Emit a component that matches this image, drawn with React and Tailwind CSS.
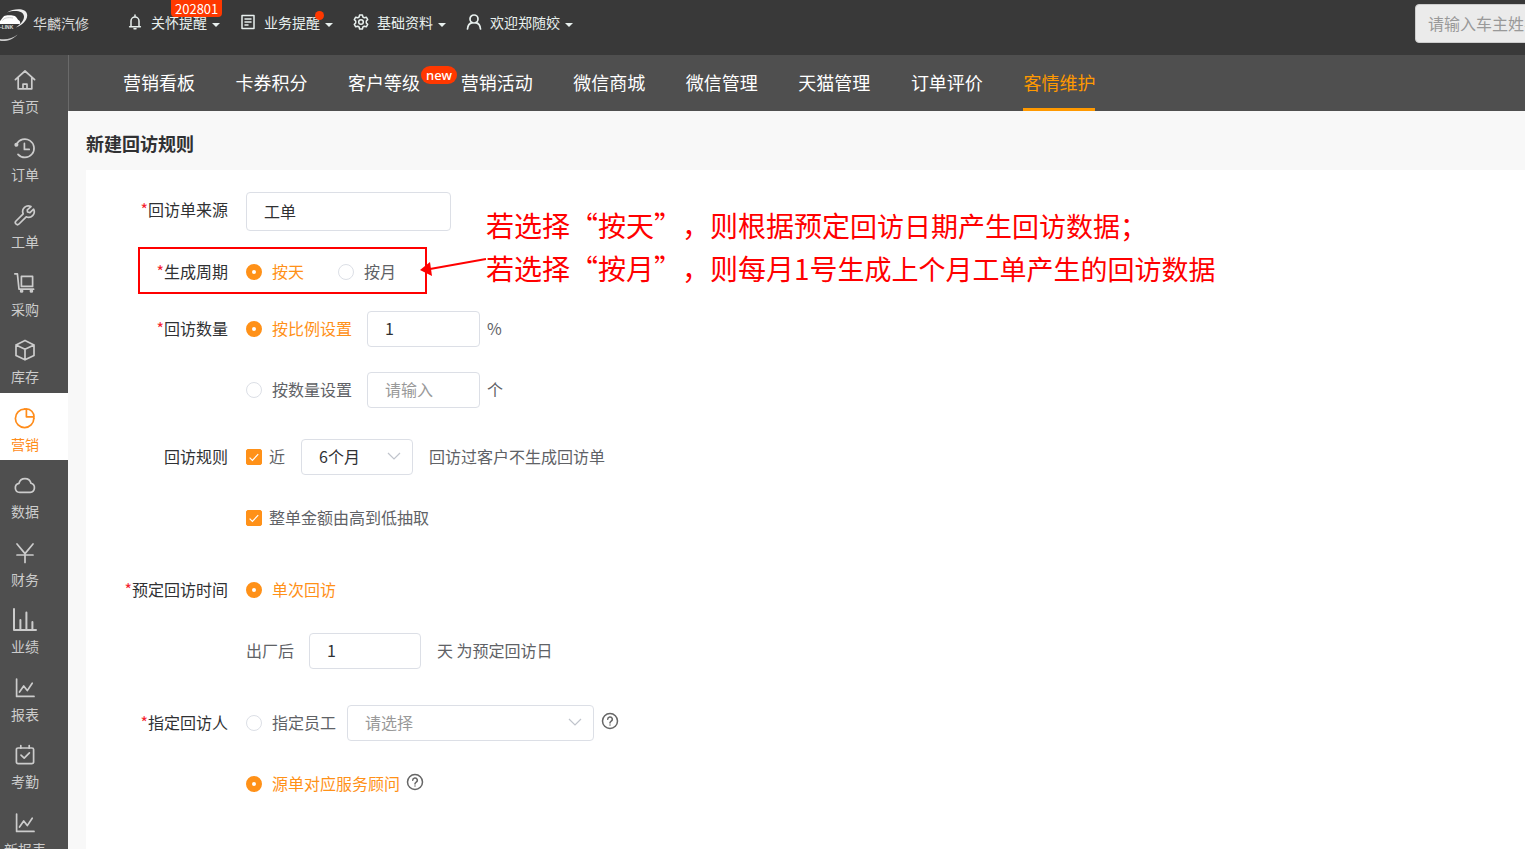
import { useState } from "react";

const stroke = { fill: "none", stroke: "currentColor", strokeWidth: 1.5, strokeLinejoin: "round", strokeLinecap: "round" };

function Icon({ children, className = "size-[22px]" }) {
  return (
    <svg viewBox="0 0 22 22" className={className} aria-hidden="true" {...stroke} strokeWidth="1.700">
      {children}
    </svg>
  );
}

const ChartIcon = () => (
  <Icon>
    <path d="M2.6 2v17.4H20M5.5 15l4.2-6 3.6 4.6 4.9-7.4" />
  </Icon>
);

const sideItems = [
  ["首页", <Icon key="i"><path d="M1.4 10.6 11 2l9.6 8.6M4.2 8.6v11.2h13.6V8.6M9 19.6v-4.4h4v4.4" /></Icon>],
  ["订单", <Icon key="i"><path d="M2.600 7.200A9.200 9.200 0 1 1 4 17.400M10.400 6.400v6h4.800" /><circle cx="2.400" cy="7.800" r="1.200" fill="currentColor" /></Icon>],
  ["工单", <Icon key="i"><path d="M17 2.600a5.600 5.600 0 0 0-7.800 7.200L2 17a2.100 2.100 0 0 0 3 3l7.200-7.200A5.600 5.600 0 0 0 19.600 5.200L16 8.600l-2.500-.6-.2-2.200z" /></Icon>],
  ["采购", <Icon key="i"><path d="M.8 1.800H3.400L5 17.200H19.600M7.400 4.400h11.200v10H7.400z" /><circle cx="7.600" cy="19" r="1" /><circle cx="17.400" cy="19" r="1" /></Icon>],
  ["库存", <Icon key="i"><path d="M11 1.400 20 6v10.400l-9 4.400-9-4.400V6zM2 6l9 4.200L20 6M11 10.200v10.600" /></Icon>],
  ["营销", <Icon key="i"><path d="M10.600 2.200A9.200 9.200 0 1 0 19.800 11.400" /><path d="M12.400 1.800v8h7.600a8 8 0 0 0-7.600-8zM19.800 11.400V9.800M10.600 2.200l1.800-.4" /></Icon>],
  ["数据", <Icon key="i"><path d="M5.800 18.400a4.600 4.600 0 0 1-.8-9.100 6.200 6.200 0 0 1 12-.1 4.700 4.700 0 0 1-.8 9.200z" /></Icon>],
  ["财务", <Icon key="i"><path d="M3 2l8 9.600L19 2M3 13h16M11 12v8.400" /></Icon>],
  ["业绩", <svg key="i" viewBox="0 0 26 24" className="h-6 w-[26px]" aria-hidden="true" {...stroke} strokeWidth="2"><path d="M2 1v21h22M8.400 12v10M14.400 4.500v17.500M20.400 14v8" /></svg>],
  ["报表", <ChartIcon key="i" />],
  ["考勤", <Icon key="i"><rect x="2.400" y="4" width="17.200" height="15.600" rx="1.600" /><path d="M6.800 1.600v2.600M15.200 1.600v2.600M7 11.200l3.200 3 5.200-5.400" /></Icon>],
  ["新报表", <ChartIcon key="i" />],
];

const navItems = ["营销看板", "卡券积分", "客户等级", "营销活动", "微信商城", "微信管理", "天猫管理", "订单评价", "客情维护"];

function Logo() {
  return (
    <svg viewBox="0 0 28 34" className="h-[34px] w-7 shrink-0" aria-hidden="true">
      <path d="M7 4.500C14 .2 26.500-.4 27.200 7c.4 6-6.200 10.600-11.400 12.600 4-3 8.400-6.800 8.200-11.200C23.600 3 15 1.600 7 4.500z" fill="#eee" />
      <path d="M0 13c1.600-1 2.600-4.600 5-5.200 3.400-.8 7.600-.6 9.800.2 2 1 2.400 3.600 4.600 4.800.9.800 1 2 .4 3.200H0z" fill="#fff" />
      <path d="M2.500 12.500C4 9.800 8 9.200 13 10" stroke="#bbb" strokeWidth=".8" fill="none" />
      <text x="0" y="21" fontSize="5" fontWeight="700" fontFamily="Liberation Sans, sans-serif" fill="#ddd">-LINK</text>
      <path d="M0 31c7 1 13-1 17.600-4.600C13 31.400 6 34 0 32.800z" fill="#ccc" />
    </svg>
  );
}

function TopItem({ icon, label, children, className = "" }) {
  return (
    <button type="button" className={`relative flex shrink-0 items-center text-sm leading-5 text-[#e8f0ee] ${className}`}>
      {icon}
      <span className="ml-2">{label}</span>
      <span className="mt-1.5 ml-[5px] border-x-4 border-t-4 border-x-transparent border-t-[#e8f0ee]" />
      {children}
    </button>
  );
}

const Txt = ({ children }) => <span className="pb-0.5">{children}</span>;

function Radio({ label, ...props }) {
  return (
    <label className="flex shrink-0 items-center gap-[10px] text-[#606266] has-checked:text-[#ff9118]">
      <input
        type="radio"
        className="size-4 appearance-none rounded-full border border-[#dcdfe6] bg-white checked:border-[6px] checked:border-[#ff9118]"
        {...props}
      />
      <Txt>{label}</Txt>
    </label>
  );
}

function Check({ label, id }) {
  const [on, setOn] = useState(true);
  return (
    <label htmlFor={id} className="flex shrink-0 items-center gap-[7px] text-[#606266]">
      <span className="grid size-4">
        <input
          id={id}
          type="checkbox"
          checked={on}
          onChange={() => setOn(!on)}
          className="col-start-1 row-start-1 size-4 appearance-none rounded-xs border border-[#dcdfe6] checked:border-[#ff9118] checked:bg-[#ff9118]"
        />
        {on && (
          <svg viewBox="0 0 16 16" className="pointer-events-none col-start-1 row-start-1 size-4" aria-hidden="true">
            <path d="M3.600 8.600l2.800 2.800 5.800-6.200" fill="none" stroke="#fff" strokeWidth="1.200" />
          </svg>
        )}
      </span>
      <Txt>{label}</Txt>
    </label>
  );
}

function Field({ className = "", ...props }) {
  return (
    <input
      type="text"
      className={`h-9 rounded border border-[#dcdfe6] bg-white px-[17px] pb-0.5 text-[#303133] outline-none placeholder:text-[#999] ${className}`}
      {...props}
    />
  );
}

function Select({ className = "", options, ...props }) {
  return (
    <span className={`grid shrink-0 items-center ${className}`}>
      <select className="col-start-1 row-start-1 h-9 w-full appearance-none rounded border border-[#dcdfe6] bg-white px-[17px] pb-0.5 text-inherit outline-none" {...props}>
        {options.map((o) => (
          <option key={o}>{o}</option>
        ))}
      </select>
      <svg viewBox="0 0 14 8" className="pointer-events-none col-start-1 row-start-1 mr-3 mb-0.5 h-2 w-[14px] justify-self-end" aria-hidden="true">
        <path d="M1 1l6 6 6-6" fill="none" stroke="#c0c4cc" strokeWidth="1.200" />
      </svg>
    </span>
  );
}

function Help() {
  return (
    <button type="button" aria-label="帮助" className="shrink-0 pb-1 text-[#666]">
      <svg viewBox="0 0 18 18" className="size-[18px]" aria-hidden="true" {...stroke}>
        <circle cx="9" cy="9" r="7.500" />
        <path d="M6.700 7.200a2.300 2.300 0 1 1 3.300 2.100c-.7.400-1 .8-1 1.500v.2M9 12.900v.2" />
      </svg>
    </button>
  );
}

function Group({ label, required, className = "", children }) {
  return (
    <div role="group" aria-label={label} className={`flex gap-[18px] ${className}`}>
      <div className="flex h-9 w-[142px] shrink-0 items-center justify-end pb-0.5 text-[#303133]">
        {required && <span className="text-[#f5222d]">*</span>}
        {label}
      </div>
      <div className="flex flex-col gap-[25px]">{children}</div>
    </div>
  );
}

const Row = ({ children }) => <div className="flex h-9 items-center whitespace-nowrap text-[#606266]">{children}</div>;

export default function App() {
  const [cycle, setCycle] = useState("day");
  const [amount, setAmount] = useState("ratio");
  const [person, setPerson] = useState("advisor");

  return (
    <div className="flex h-screen flex-col overflow-hidden bg-[#f8f8f8] font-['Noto_Sans_CJK_SC',sans-serif] text-base leading-6" lang="zh-CN">
      <header className="flex h-[55px] shrink-0 items-start overflow-hidden bg-[#393939]">
        <div className="flex w-[127px] shrink-0 items-center gap-[5px] pt-2">
          <Logo />
          <span className="pb-1 text-sm whitespace-nowrap text-[#d8d8d8]">华麟汽修</span>
        </div>
        <div className="flex shrink-0 pt-3 whitespace-nowrap">
          <TopItem
            label="关怀提醒"
            icon={<svg viewBox="0 0 16 16" className="size-4" aria-hidden="true" {...stroke}><path d="M2.600 12.800h10.800M4 12.600V7a4 4 0 0 1 8 0v5.600M8 1v2M7 14.800h2" /></svg>}
          >
            <span className="absolute -top-3 left-11 rounded-b-sm bg-[#ff3800] px-1 text-[13px] leading-[17px] text-white">202801</span>
          </TopItem>
          <TopItem
            className="ml-5"
            label="业务提醒"
            icon={<svg viewBox="0 0 16 16" className="size-4" aria-hidden="true" {...stroke}><path d="M2 1.500h12v13H2zM5 5h6M5 8h6M5 11h3" /></svg>}
          >
            <span className="absolute -top-px right-[9px] size-[9px] rounded-full bg-[#ff3800]" />
          </TopItem>
          <TopItem
            className="ml-5"
            label="基础资料"
            icon={<svg viewBox="0 0 16 16" className="size-4" aria-hidden="true" {...stroke}><path d="M6.600 1h2.800l.5 2 1.400.8 2-.6 1.400 2.400L13.300 7v2l1.400 1.400-1.400 2.400-2-.6-1.400.8-.5 2H6.600l-.5-2-1.400-.8-2 .6-1.400-2.400L2.700 9V7L1.300 5.600l1.400-2.400 2 .6L6.100 3z" /><circle cx="8" cy="8" r="2.300" /></svg>}
          />
          <TopItem
            className="ml-5"
            label="欢迎郑随姣"
            icon={<svg viewBox="0 0 16 16" className="size-4" aria-hidden="true" {...stroke} strokeWidth="1.700"><circle cx="8" cy="5" r="4" /><path d="M1.500 15c.3-3.600 2.500-5.800 4.700-6.300M14.500 15c-.3-3.600-2.500-5.800-4.700-6.300" /></svg>}
          />
        </div>
        <input
          type="text"
          aria-label="搜索"
          placeholder="请输入车主姓名/车牌号"
          className="-mr-[90px] mt-1 ml-auto h-[39px] w-[200px] shrink-0 rounded border border-[#ccc] bg-[#ebebeb] px-3 pb-0.5 outline-none placeholder:text-[#999]"
        />
      </header>

      <div className="flex min-h-0 flex-1">
        <aside className="w-[68px] shrink-0 overflow-hidden bg-[#4f4f4f]">
          <nav className="grid h-[810px] grid-rows-12">
            {sideItems.map(([label, icon]) => (
              <a
                key={label}
                href="#"
                aria-current={label === "营销" ? "page" : undefined}
                className={`flex flex-col items-center gap-1 pt-[13px] pr-[18px] text-sm leading-5 whitespace-nowrap ${label === "营销" ? "bg-white text-[#ff8c1a]" : "text-[#ccc]"}`}
              >
                <span className="flex h-6 items-center">{icon}</span>
                {label}
              </a>
            ))}
          </nav>
        </aside>

        <div className="flex min-w-0 flex-1 flex-col">
          <nav className="h-14 shrink-0 overflow-hidden border-l border-[#6a6a6a] bg-[#4f4f4f] pl-[54px]">
            <div className="grid h-full w-[1013px] grid-cols-9">
              {navItems.map((label) => (
                <a
                  key={label}
                  href="#"
                  className={`relative justify-self-start border-b-[3px] pt-[14px] text-lg leading-[26px] whitespace-nowrap ${label === "客情维护" ? "border-[#ff9900] text-[#ff9900]" : "border-transparent text-white"}`}
                >
                  {label}
                  {label === "客户等级" && (
                    <span className="absolute top-[11px] left-[73px] z-10 rounded-full bg-[#ff3800] px-[5px] font-['Noto_Sans'] text-[13px] leading-[18px] font-medium text-white">new</span>
                  )}
                </a>
              ))}
            </div>
          </nav>

          <main className="flex min-h-0 flex-1 flex-col pl-[18px]">
            <h1 className="shrink-0 pt-5 pb-[14px] text-lg leading-[25px] font-bold text-[#303133]">新建回访规则</h1>
            <form className="relative flex-1 overflow-hidden bg-white pt-[22px]">
              <Group label="回访单来源" required>
                <Field aria-label="回访单来源" defaultValue="工单" className="h-[39px] w-[205px]" />
              </Group>
              <Group label="生成周期" required className="mt-[23px]">
                <Row>
                  <Radio name="cycle" label="按天" checked={cycle === "day"} onChange={() => setCycle("day")} />
                  <span className="w-[34px]" />
                  <Radio name="cycle" label="按月" checked={cycle === "month"} onChange={() => setCycle("month")} />
                </Row>
              </Group>
              <Group label="回访数量" required className="mt-[21px]">
                <Row>
                  <Radio name="amount" label="按比例设置" checked={amount === "ratio"} onChange={() => setAmount("ratio")} />
                  <Field aria-label="比例" defaultValue="1" className="mr-[7px] ml-[15px] w-[113px]" />
                  <Txt>%</Txt>
                </Row>
                <Row>
                  <Radio name="amount" label="按数量设置" checked={amount === "count"} onChange={() => setAmount("count")} />
                  <Field aria-label="数量" placeholder="请输入" className="mr-[7px] ml-[15px] w-[113px]" />
                  <Txt>个</Txt>
                </Row>
              </Group>
              <Group label="回访规则" className="mt-[31px]">
                <Row>
                  <Check id="recent" label="近" />
                  <Select aria-label="时间范围" options={["6个月"]} className="mx-4 w-[112px] text-[#303133]" />
                  <Txt>回访过客户不生成回访单</Txt>
                </Row>
                <Row>
                  <Check id="order" label="整单金额由高到低抽取" />
                </Row>
              </Group>
              <Group label="预定回访时间" required className="mt-9">
                <Row>
                  <Radio name="time" label="单次回访" defaultChecked />
                </Row>
                <Row>
                  <Txt>出厂后</Txt>
                  <Field aria-label="出厂后天数" defaultValue="1" className="mr-4 ml-[15px] w-[112px]" />
                  <Txt>天 为预定回访日</Txt>
                </Row>
              </Group>
              <Group label="指定回访人" required className="mt-9">
                <Row>
                  <Radio name="person" label="指定员工" checked={person === "staff"} onChange={() => setPerson("staff")} />
                  <Select aria-label="员工" options={["请选择"]} className="mr-[7px] ml-[11px] w-[247px] text-[#999]" />
                  <Help />
                </Row>
                <Row>
                  <Radio name="person" label="源单对应服务顾问" checked={person === "advisor"} onChange={() => setPerson("advisor")} />
                  <span className="w-1.5" />
                  <Help />
                </Row>
              </Group>

              <div className="pointer-events-none absolute top-[77px] left-[52px] h-[47px] w-[289px] border-2 border-[#f00]" />
              <svg viewBox="0 0 70 24" className="pointer-events-none absolute top-[84px] left-[332px] h-6 w-[70px]" aria-hidden="true">
                <path d="M68 5 12 15" stroke="#f00" strokeWidth="1.800" />
                <path d="M2 16 12 8l2 14z" fill="#f00" />
              </svg>
              <p className="pointer-events-none absolute top-[34px] left-[400px] text-[27px] leading-[42px] whitespace-nowrap text-[#f00] [text-spacing-trim:space-all]">
                <span className="text-[28px]">若选择“按天”，则根据预定</span>回访日期产生回访数据；
                <br />
                <span className="text-[28px]">若选择“按月”，则每月1号</span>生成上个月工单产生的回访数据
              </p>
            </form>
          </main>
        </div>
      </div>
    </div>
  );
}
